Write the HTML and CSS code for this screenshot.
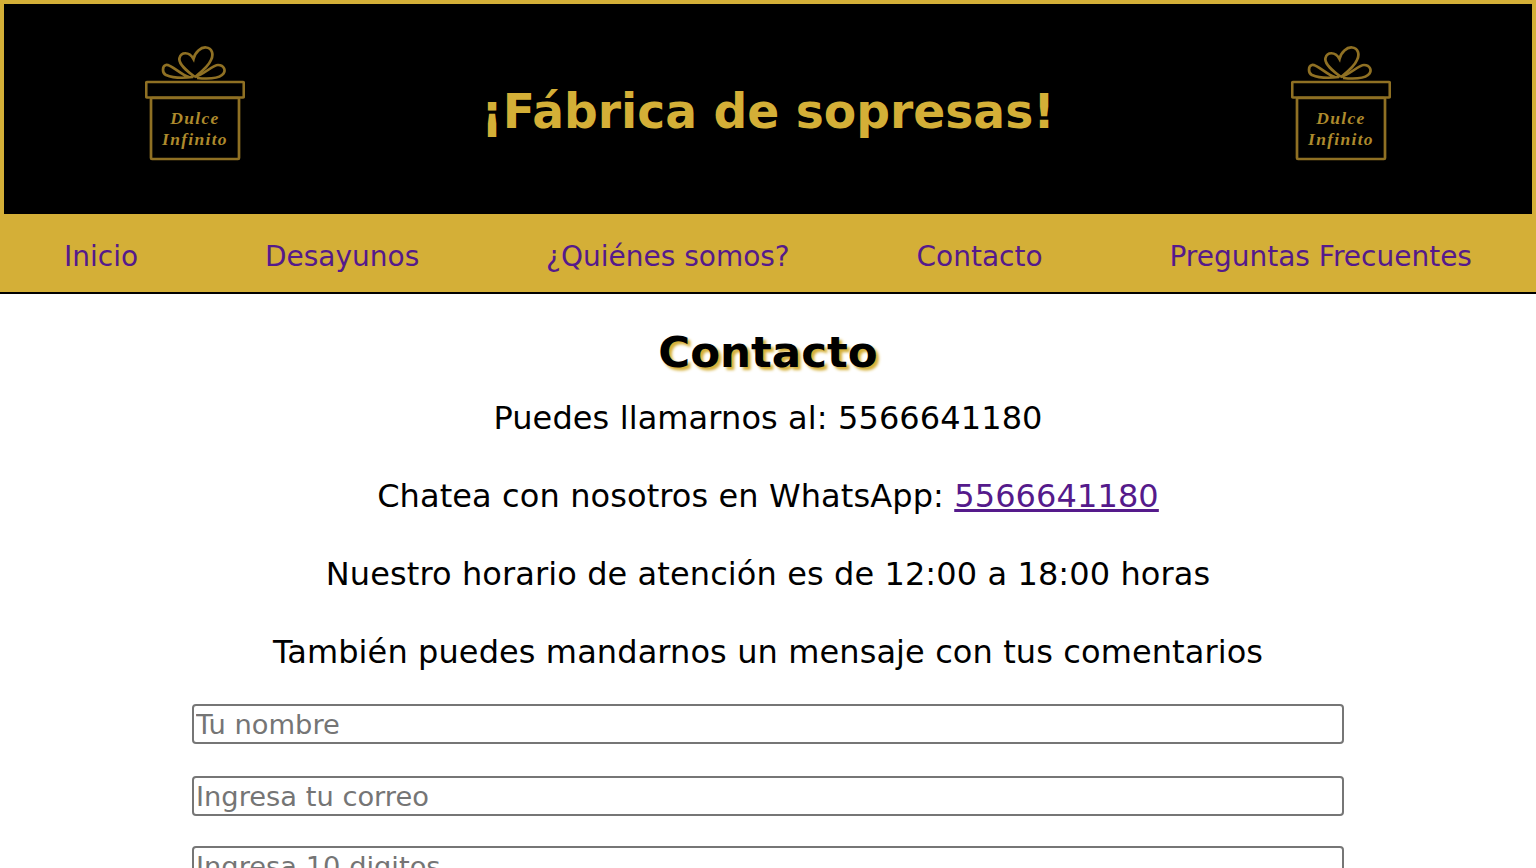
FILE: index.html
```html
<!DOCTYPE html>
<html lang="es">
<head>
<meta charset="utf-8">
<title>Contacto</title>
<link rel="stylesheet" href="styles.css">
</head>
<body>
<header class="banner">
  <svg class="logo" viewBox="0 0 100 115" aria-hidden="true">
    <g class="logo-line">
      <path d="M50 31C42 25 33 18 34.500 12C36 6 44 5 48.500 13C50 6 56 1 61 1.500C67 2 69 8 66 14C63 21 56 26 50 31"/>
      <path d="M44 31C36 29 26 18 21 19C17 20 17 27 21 29C28 32 40 32 48 31"/>
      <path d="M50 31C58 29 68 19 73 19C79 19 82 25 77 29C72 33 62 33 52 32"/>
      <rect x="1.200" y="36" width="97.600" height="15.500" rx="1"/>
      <rect x="6" y="52" width="88" height="61" rx="1"/>
    </g>
    <text class="logo-text" x="50" y="78">Dulce</text>
    <text class="logo-text" x="50" y="99">Infinito</text>
  </svg>
  <h1 class="title">¡Fábrica de sopresas!</h1>
  <svg class="logo" viewBox="0 0 100 115" aria-hidden="true">
    <g class="logo-line">
      <path d="M50 31C42 25 33 18 34.500 12C36 6 44 5 48.500 13C50 6 56 1 61 1.500C67 2 69 8 66 14C63 21 56 26 50 31"/>
      <path d="M44 31C36 29 26 18 21 19C17 20 17 27 21 29C28 32 40 32 48 31"/>
      <path d="M50 31C58 29 68 19 73 19C79 19 82 25 77 29C72 33 62 33 52 32"/>
      <rect x="1.200" y="36" width="97.600" height="15.500" rx="1"/>
      <rect x="6" y="52" width="88" height="61" rx="1"/>
    </g>
    <text class="logo-text" x="50" y="78">Dulce</text>
    <text class="logo-text" x="50" y="99">Infinito</text>
  </svg>
</header>
<nav class="menu">
  <a href="#">Inicio</a>
  <a href="#">Desayunos</a>
  <a href="#">¿Quiénes somos?</a>
  <a href="#">Contacto</a>
  <a href="#">Preguntas Frecuentes</a>
</nav>
<main class="content">
  <h2 class="heading">Contacto</h2>
  <p>Puedes llamarnos al: 5566641180</p>
  <p>Chatea con nosotros en WhatsApp: <a href="#">5566641180</a></p>
  <p>Nuestro horario de atención es de 12:00 a 18:00 horas</p>
  <p>También puedes mandarnos un mensaje con tus comentarios</p>
  <form class="form">
    <input class="field" type="text" placeholder="Tu nombre">
    <input class="field" type="email" placeholder="Ingresa tu correo">
    <input class="field field-last" type="tel" placeholder="Ingresa 10 digitos">
  </form>
</main>
</body>
</html>
```
FILE: styles.css
```css
html, body { margin: 0; height: 100%; overflow: hidden; background: #fff; }
body { font-family: "DejaVu Sans", Verdana, sans-serif; color: #000; }
.banner {
  box-sizing: border-box;
  height: 214px;
  background: #000;
  border: 4px solid #d4af37;
  border-bottom: 0;
  display: flex;
  align-items: center;
  justify-content: space-between;
  padding: 0 141px;
}
.logo { width: 100px; height: 115px; margin-bottom: 11px; }
.logo-line { fill: none; stroke: #8f7023; stroke-width: 2.7; }
.logo-text { font-family: "Liberation Serif", serif; font-style: italic; font-weight: 700; font-size: 17.500px; letter-spacing: 1.300px; fill: #ad8a2c; text-anchor: middle; }
.title { margin: 4px 0 0; font-size: 47.200px; font-weight: 700; color: #d4af37; }
.menu {
  box-sizing: border-box;
  height: 80px;
  background: #d4af37;
  border-bottom: 2px solid #000;
  display: flex;
  align-items: center;
  justify-content: space-between;
  padding: 6px 64px 0;
  font-size: 28px;
}
.menu a { color: #551a8b; text-decoration: none; }
.content { text-align: center; }
.heading { margin: 32px 0 0; font-size: 43.500px; line-height: 52px; font-weight: 700; text-shadow: 3px 3px 3px #d4af37; }
.content p { margin: 0; font-size: 32px; letter-spacing: .1px; line-height: 39px; padding-bottom: 39px; }
.content p:first-of-type { margin-top: 21px; }
.content p a { color: #551a8b; }
.form { display: flex; flex-direction: column; align-items: center; gap: 32px; margin-top: -7px; }
.field {
  box-sizing: border-box;
  width: 1152px;
  height: 40px;
  padding: 1px 2px;
  border: 2px solid #767676;
  border-radius: 4px;
  font: 27.300px "DejaVu Sans", Verdana, sans-serif;
}
.field-last { margin-top: -2px; }
.field::placeholder { color: #757575; }
```
